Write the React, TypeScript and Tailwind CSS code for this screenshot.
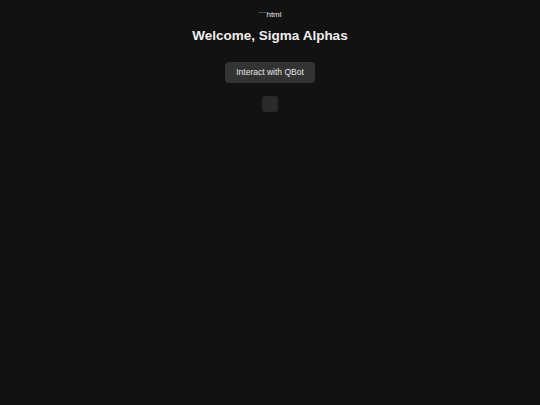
export default function App() {
  return (
    <div className="min-h-[405px] w-full bg-[#121212] text-white flex flex-col items-center" style={{ fontFamily: '"Liberation Sans", Arial, sans-serif' }}>
      <div className="mt-[10px] text-[8px] leading-[9px] text-[#e5e5e5]">```html</div>
      <h1 className="mt-[9px] text-[13.5px] leading-[16px] font-bold text-[#eeeeee]">Welcome, Sigma Alphas</h1>
      <button className="mt-[18px] w-[90px] h-[21px] rounded-[4px] bg-[#333333] text-[8.5px] text-[#e5e5e5]">Interact with QBot</button>
      <div className="mt-[13px] w-[16px] h-[16px] rounded-[3px] bg-[#2a2a2a]"></div>
    </div>
  );
}
